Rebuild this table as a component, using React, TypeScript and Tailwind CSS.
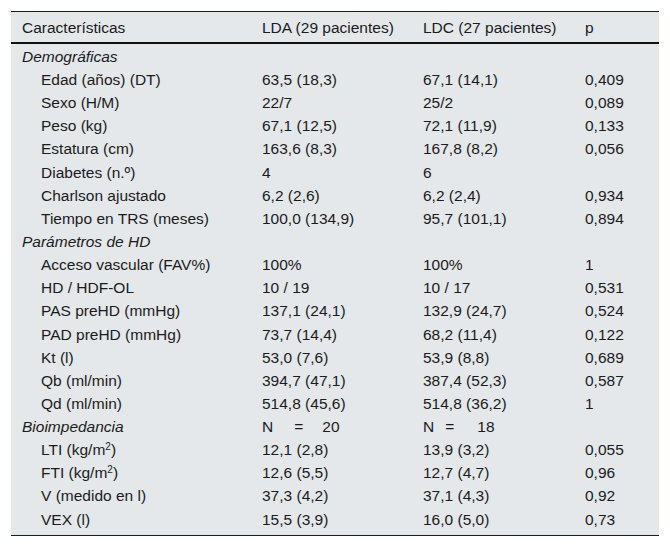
import type { ReactNode } from 'react'

type Row = {
  label: ReactNode
  lda?: ReactNode
  ldc?: ReactNode
  p?: string
  section?: boolean
}

const rows: Row[] = [
  { label: 'Demográficas', section: true },
  { label: 'Edad (años) (DT)', lda: '63,5 (18,3)', ldc: '67,1 (14,1)', p: '0,409' },
  { label: 'Sexo (H/M)', lda: '22/7', ldc: '25/2', p: '0,089' },
  { label: 'Peso (kg)', lda: '67,1 (12,5)', ldc: '72,1 (11,9)', p: '0,133' },
  { label: 'Estatura (cm)', lda: '163,6 (8,3)', ldc: '167,8 (8,2)', p: '0,056' },
  { label: 'Diabetes (n.º)', lda: '4', ldc: '6' },
  { label: 'Charlson ajustado', lda: '6,2 (2,6)', ldc: '6,2 (2,4)', p: '0,934' },
  { label: 'Tiempo en TRS (meses)', lda: '100,0 (134,9)', ldc: '95,7 (101,1)', p: '0,894' },
  { label: 'Parámetros de HD', section: true },
  { label: 'Acceso vascular (FAV%)', lda: '100%', ldc: '100%', p: '1' },
  { label: 'HD / HDF-OL', lda: '10 / 19', ldc: '10 / 17', p: '0,531' },
  { label: 'PAS preHD (mmHg)', lda: '137,1 (24,1)', ldc: '132,9 (24,7)', p: '0,524' },
  { label: 'PAD preHD (mmHg)', lda: '73,7 (14,4)', ldc: '68,2 (11,4)', p: '0,122' },
  { label: 'Kt (l)', lda: '53,0 (7,6)', ldc: '53,9 (8,8)', p: '0,689' },
  { label: 'Qb (ml/min)', lda: '394,7 (47,1)', ldc: '387,4 (52,3)', p: '0,587' },
  { label: 'Qd (ml/min)', lda: '514,8 (45,6)', ldc: '514,8 (36,2)', p: '1' },
  {
    label: 'Bioimpedancia',
    section: true,
    // the "=" sits at different spots in each column in the source table
    lda: (
      <span className="flex">
        N<span className="ml-[21px]">=</span>
        <span className="ml-[19px]">20</span>
      </span>
    ),
    ldc: (
      <span className="flex">
        N<span className="ml-[11px]">=</span>
        <span className="ml-[23px]">18</span>
      </span>
    ),
  },
  { label: <>LTI (kg/m<sup className="text-[10px]">2</sup>)</>, lda: '12,1 (2,8)', ldc: '13,9 (3,2)', p: '0,055' },
  { label: <>FTI (kg/m<sup className="text-[10px]">2</sup>)</>, lda: '12,6 (5,5)', ldc: '12,7 (4,7)', p: '0,96' },
  { label: 'V (medido en l)', lda: '37,3 (4,2)', ldc: '37,1 (4,3)', p: '0,92' },
  { label: 'VEX (l)', lda: '15,5 (3,9)', ldc: '16,0 (5,0)', p: '0,73' },
]

const cols = 'grid grid-cols-[240px_161px_162px_1fr] pl-[11px] items-center leading-none'

export default function App() {
  return (
    <div
      className="w-[670px] h-[549px] bg-white pt-[11px] pl-[11px] text-[#1b1b1b] text-[15.5px]"
      style={{ fontFamily: '"Liberation Sans", Arial, sans-serif' }}
    >
      <div className="w-[648px] bg-[#e4e8eb] border-t border-b border-[#1b1b1b] pb-[5px]">
        {/* Header */}
        <div className={`${cols} h-[32px] pt-[2px] border-b-2 border-[#111]`}>
          <div>Características</div>
          <div>LDA (29 pacientes)</div>
          <div>LDC (27 pacientes)</div>
          <div>p</div>
        </div>

        {/* Body */}
        {rows.map((r, i) => (
          <div key={i} className={`${cols} h-[23.15px] pt-[2px]`}>
            <div className={r.section ? 'italic' : 'pl-[19px]'}>{r.label}</div>
            <div>{r.lda}</div>
            <div>{r.ldc}</div>
            <div>{r.p}</div>
          </div>
        ))}
      </div>
    </div>
  )
}
